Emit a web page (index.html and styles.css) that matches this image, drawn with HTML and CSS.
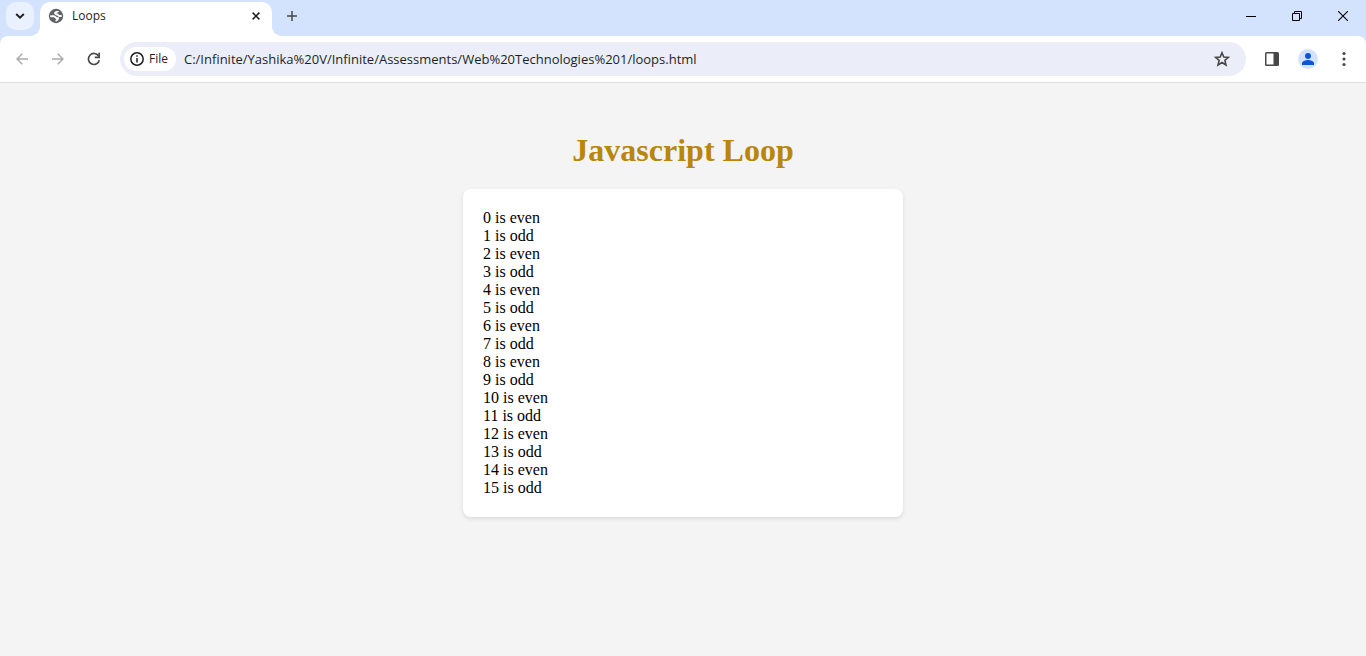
FILE: index.html
```html
<!DOCTYPE html>
<html lang="en">
<head>
<meta charset="utf-8">
<title>Loops</title>
<link rel="stylesheet" href="styles.css">
</head>
<body>
<header class="browser">
  <div class="tab-strip">
    <button class="tab-search" aria-label="Search tabs"><svg width="10" height="6" viewBox="0 0 10 6"><path d="M1.2 1l3.8 3.6L8.800 1" fill="none" stroke="#1f1f1f" stroke-width="1.9"/></svg></button>
    <div class="tab">
      <svg width="16" height="16" viewBox="0 0 16 16"><circle cx="8" cy="8" r="7.200" fill="#5f6368"/><path d="M2.300 8.200H5.800C7.500 8.200 7.400 10.100 8.600 10.200H10C10 12 8.200 11.500 8.200 13.300M10 2.900C10 4.200 7.300 3.400 7 4.900C6.900 6.500 9.400 6 10 7.200C10.500 8.200 12 8.200 13.700 7.600" fill="none" stroke="#fff" stroke-width="1.900"/></svg>
      <span class="tab-title">Loops</span>
      <button class="tab-close" aria-label="Close tab"><svg width="8" height="8" viewBox="0 0 8 8"><path d="M.6.6l6.800 6.800M7.400.6L.6 7.400" stroke="#1f1f1f" stroke-width="1.500"/></svg></button>
    </div>
    <button class="new-tab" aria-label="New tab"><svg width="10" height="10" viewBox="0 0 10 10"><path d="M5 0v10M0 5h10" stroke="#474747" stroke-width="1.500"/></svg></button>
    <div class="window-controls">
      <button aria-label="Minimize"><svg width="10" height="10" viewBox="0 0 10 10"><path d="M0 5.500h10" stroke="#000"/></svg></button>
      <button aria-label="Restore"><svg width="10" height="10" viewBox="0 0 10 10"><path d="M.5 2.500h7v7h-7zM2.500 2.500v-2h7v7h-2" fill="none" stroke="#000"/></svg></button>
      <button aria-label="Close"><svg width="10" height="10" viewBox="0 0 10 10"><path d="M0 0l10 10M10 0L0 10" stroke="#000" stroke-width="1.100"/></svg></button>
    </div>
  </div>
  <div class="toolbar">
    <nav class="nav">
      <button aria-label="Back" disabled><svg width="12" height="12" viewBox="0 0 12 12"><path d="M12 6H1.200M6.300.7L1 6l5.300 5.300" fill="none" stroke="#ababab" stroke-width="1.500"/></svg></button>
      <button aria-label="Forward" disabled><svg width="12" height="12" viewBox="0 0 12 12"><path d="M0 6h10.800M5.700.7L11 6l-5.300 5.300" fill="none" stroke="#ababab" stroke-width="1.500"/></svg></button>
      <button aria-label="Reload"><svg width="14" height="14" viewBox="0 0 14 14"><path d="M12.300 8.300A5.500 5.500 0 1 1 11.600 4" fill="none" stroke="#474747" stroke-width="1.700"/><path d="M13 .8v5.400H7.800V4.500h3.500V.8z" fill="#474747"/></svg></button>
    </nav>
    <div class="omnibox">
      <button class="chip"><svg width="14" height="14" viewBox="0 0 14 14"><circle cx="7" cy="7" r="6.200" fill="none" stroke="#1f1f1f" stroke-width="1.500"/><path d="M7 3.200v1.600M7 6v4.600" stroke="#1f1f1f" stroke-width="1.500"/></svg>File</button>
      <input class="url" aria-label="Address" type="text" spellcheck="false" value="C:/Infinite/Yashika%20V/Infinite/Assessments/Web%20Technologies%201/loops.html">
      <button class="star" aria-label="Bookmark"><svg width="16" height="16" viewBox="0 0 16 16"><path d="M8 1.700l1.800 4.300 4.600.4-3.500 3 1.100 4.600L8 11.500 4 14l1.100-4.600-3.500-3 4.600-.4z" fill="none" stroke="#474747" stroke-width="1.600"/></svg></button>
    </div>
    <div class="actions">
      <button aria-label="Side panel"><svg width="14" height="14" viewBox="0 0 14 14"><rect width="14" height="14" rx="1.500" fill="#474747"/><path d="M1.500 1.500h7v11h-7z" fill="#fff"/></svg></button>
      <button aria-label="Profile"><svg width="20" height="20" viewBox="0 0 20 20"><circle cx="10" cy="10" r="10" fill="#d3e3fd"/><circle cx="10" cy="7" r="3" fill="#0b57d0"/><path d="M4 16v-1.800C4 12 8 11 10 11s6 1 6 3.200V16z" fill="#0b57d0"/></svg></button>
      <button aria-label="Menu"><svg width="4" height="16" viewBox="0 0 4 16"><g fill="#474747"><circle cx="2" cy="2.500" r="1.600"/><circle cx="2" cy="8" r="1.600"/><circle cx="2" cy="13.500" r="1.600"/></g></svg></button>
    </div>
  </div>
</header>
<main class="page">
  <h1 class="heading">Javascript Loop</h1>
  <div class="card">0 is even<br>1 is odd<br>2 is even<br>3 is odd<br>4 is even<br>5 is odd<br>6 is even<br>7 is odd<br>8 is even<br>9 is odd<br>10 is even<br>11 is odd<br>12 is even<br>13 is odd<br>14 is even<br>15 is odd</div>
</main>
</body>
</html>
```
FILE: styles.css
```css
* { box-sizing: border-box; }
body {
  margin: 0;
  min-height: 100vh;
  background: #f4f4f4;
  font-family: "Liberation Serif", "Times New Roman", serif;
}
button {
  display: flex;
  align-items: center;
  justify-content: center;
  padding: 0;
  border: 0;
  background: none;
  color: #1f1f1f;
}
.browser {
  background: #d3e3fd;
  font-family: "Open Sans", "Segoe UI", sans-serif;
}
.tab-strip {
  display: flex;
  height: 36px;
  padding: 2px 0 0 6px;
}
.tab-search {
  width: 28px;
  height: 28px;
  border-radius: 10px;
  background: #e9f0fe;
}
.tab {
  position: relative;
  display: flex;
  align-items: center;
  gap: 8px;
  width: 232px;
  margin-left: 6px;
  padding: 0 8px 6px 8px;
  border-radius: 10px 10px 0 0;
  background: #fff;
}
.tab::before,
.tab::after {
  content: "";
  position: absolute;
  bottom: 0;
  width: 10px;
  height: 10px;
}
.tab::before {
  right: 100%;
  background: radial-gradient(circle at 0 0, transparent 10px, #fff 10px);
}
.tab::after {
  left: 100%;
  background: radial-gradient(circle at 100% 0, transparent 10px, #fff 10px);
}
.tab-title {
  flex: 1;
  font-size: 12px;
  line-height: 18px;
  color: #1f1f1f;
}
.tab-close { width: 16px; height: 16px; }
.new-tab {
  width: 28px;
  height: 28px;
  margin-left: 6px;
}
.window-controls {
  display: flex;
  height: 28px;
  margin-left: auto;
}
.window-controls button { width: 46px; }
.toolbar {
  display: flex;
  align-items: center;
  height: 47px;
  padding: 0 4px;
  border-bottom: 1px solid #dfdfdf;
  border-radius: 8px 8px 0 0;
  background: #fff;
}
.nav,
.actions { display: flex; }
.nav button,
.actions button {
  width: 36px;
  height: 34px;
}
.omnibox {
  flex: 1;
  display: flex;
  align-items: center;
  height: 34px;
  margin: 0 8px;
  padding: 0 10px 0 4px;
  border-radius: 17px;
  background: #ebeef8;
}
.chip {
  justify-content: flex-start;
  gap: 5px;
  width: 52px;
  height: 24px;
  padding-left: 6px;
  border-radius: 12px;
  background: #fff;
  font: 500 12px/16px "Open Sans", "Segoe UI", sans-serif;
}
.url {
  flex: 1;
  min-width: 0;
  height: 24px;
  padding: 0 8px;
  border: 0;
  outline: 0;
  background: none;
  font: 13px/18px "Open Sans", "Segoe UI", sans-serif;
  color: #1f1f1f;
}
.star { width: 28px; height: 28px; }
.page { padding: 48px 20px; }
.heading {
  margin: 0 0 20px;
  font-size: 32px;
  line-height: 38px;
  text-align: center;
  color: #b8860b;
}
.card {
  max-width: 440px;
  margin: 0 auto;
  padding: 20px;
  border-radius: 8px;
  background: #fff;
  box-shadow: 0 2px 4px rgba(0, 0, 0, 0.1);
  font-size: 16px;
  line-height: 18px;
  color: #000;
}
```
